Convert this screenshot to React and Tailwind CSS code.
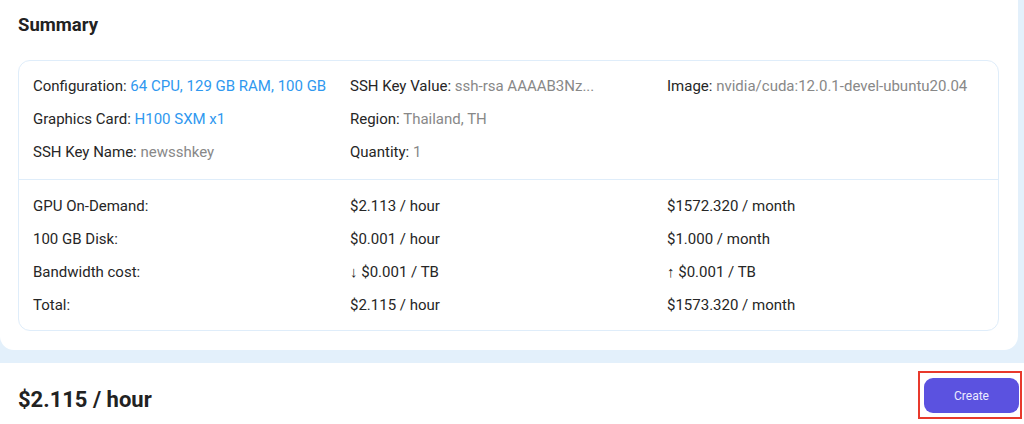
const details = [
  [
    { label: "Configuration:", value: "64 CPU, 129 GB RAM, 100 GB", tone: "blue" },
    { label: "SSH Key Value:", value: "ssh-rsa AAAAB3Nz...", tone: "gray" },
    { label: "Image:", value: "nvidia/cuda:12.0.1-devel-ubuntu20.04", tone: "gray" },
  ],
  [
    { label: "Graphics Card:", value: "H100 SXM x1", tone: "blue" },
    { label: "Region:", value: "Thailand, TH", tone: "gray" },
    null,
  ],
  [
    { label: "SSH Key Name:", value: "newsshkey", tone: "gray" },
    { label: "Quantity:", value: "1", tone: "gray" },
    null,
  ],
];

const costs = [
  ["GPU On-Demand:", "$2.113 / hour", "$1572.320 / month"],
  ["100 GB Disk:", "$0.001 / hour", "$1.000 / month"],
  ["Bandwidth cost:", "↓ $0.001 / TB", "↑ $0.001 / TB"],
  ["Total:", "$2.115 / hour", "$1573.320 / month"],
];

function Detail({ item }) {
  if (!item) return <div />;
  return (
    <div className="whitespace-nowrap">
      <span className="text-[#262626]">{item.label} </span>
      <span className={item.tone === "blue" ? "text-[#2f98ef]" : "text-[#888]"}>
        {item.value}
      </span>
    </div>
  );
}

export default function App() {
  return (
    <div
      className="w-[1024px] h-[424px] bg-[#e3f0fb] flex flex-col overflow-hidden"
      style={{ fontFamily: "Roboto, 'Liberation Sans', sans-serif" }}
    >
      {/* Summary panel */}
      <div className="bg-white mr-[6px] rounded-b-[14px] pl-[18px] pr-[19px] pt-[11px] pb-[19px]">
        <h2 className="text-[18.5px] leading-[28px] font-bold text-[#222]">Summary</h2>

        <div className="mt-[21px] border border-[#dfedfa] rounded-[12px] text-[15px] leading-[20px]">
          <div className="px-[14px] pt-[15px] pb-[17px] flex flex-col gap-[13px]">
            {details.map((row, i) => (
              <div key={i} className="grid grid-cols-3">
                {row.map((item, j) => (
                  <Detail key={j} item={item} />
                ))}
              </div>
            ))}
          </div>

          <div className="border-t border-[#dfedfa] px-[14px] pt-[16px] pb-[15px] flex flex-col gap-[13px] text-[#262626]">
            {costs.map((row) => (
              <div key={row[0]} className="grid grid-cols-3">
                {row.map((c) => (
                  <div key={c}>{c}</div>
                ))}
              </div>
            ))}
          </div>
        </div>
      </div>

      {/* Footer */}
      <div className="mt-[13px] flex-1 bg-white flex items-start justify-between pl-[18px] pr-[2px] pt-[8px]">
        <div className="mt-[17px] text-[22px] leading-[24px] font-bold text-[#222]">$2.115 / hour</div>
        <div className="border-2 border-[#e8392c] pl-[4px] pr-[1px] pt-[5px] pb-[4px]">
          <button className="w-[95px] h-[35px] rounded-[9px] bg-[#5b52e0] text-[#ecebff] text-[12px]">
            Create
          </button>
        </div>
      </div>
    </div>
  );
}
